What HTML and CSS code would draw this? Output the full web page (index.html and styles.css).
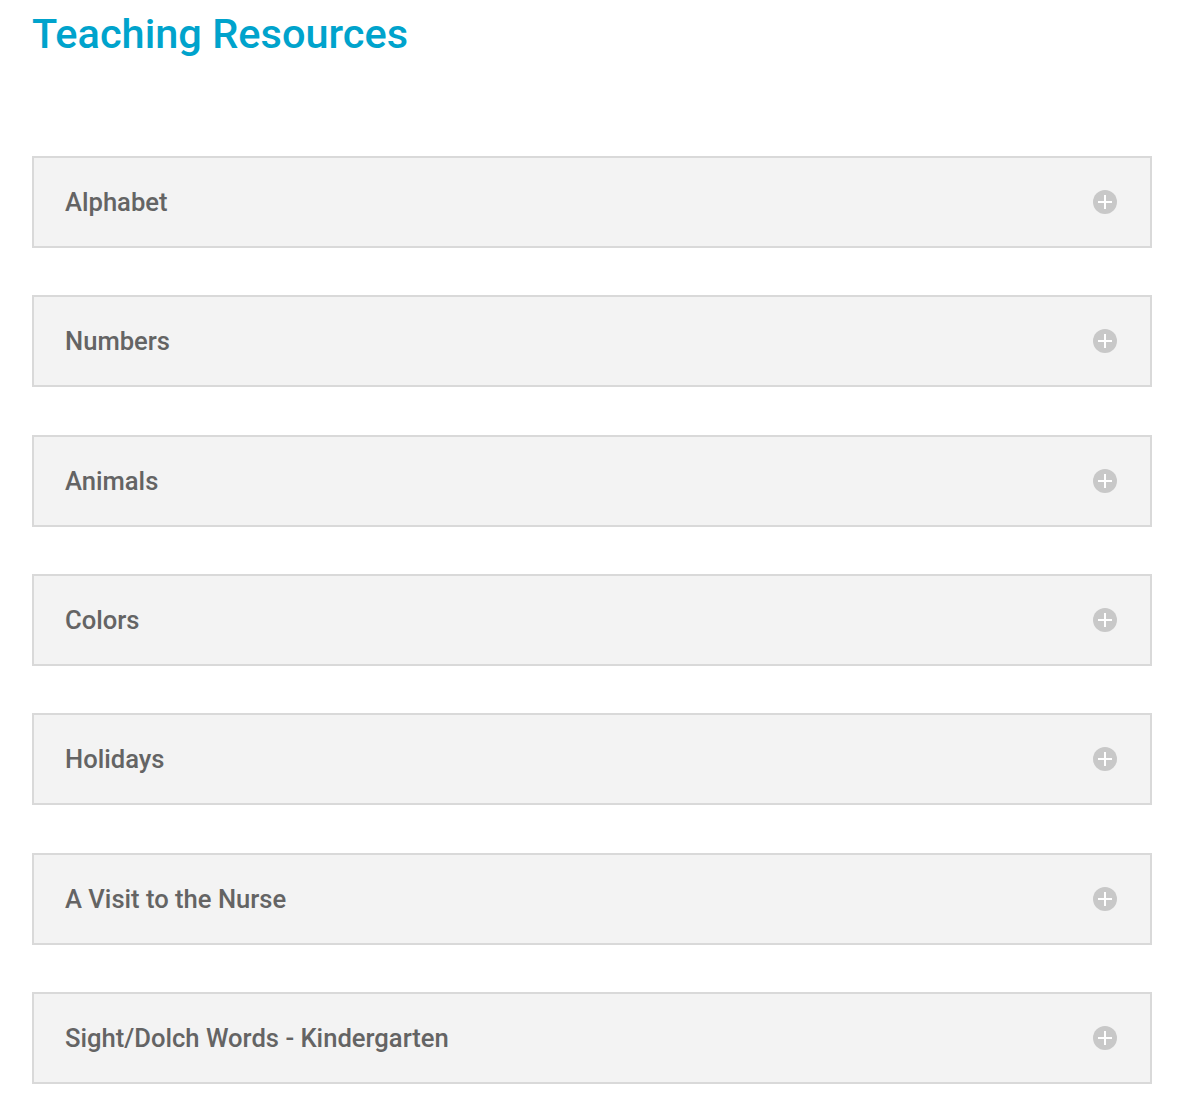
FILE: index.html
```html
<!DOCTYPE html>
<html>
<head>
<meta charset="utf-8">
<link rel="stylesheet" href="styles.css">
</head>
<body>
<div class="page">
  <h1 class="title">Teaching Resources</h1>
  <div class="accordion">
    <div class="item"><span class="label">Alphabet</span><span class="toggle"></span></div>
    <div class="item"><span class="label">Numbers</span><span class="toggle"></span></div>
    <div class="item"><span class="label">Animals</span><span class="toggle"></span></div>
    <div class="item"><span class="label">Colors</span><span class="toggle"></span></div>
    <div class="item"><span class="label">Holidays</span><span class="toggle"></span></div>
    <div class="item"><span class="label">A Visit to the Nurse</span><span class="toggle"></span></div>
    <div class="item"><span class="label">Sight/Dolch Words - Kindergarten</span><span class="toggle"></span></div>
  </div>
</div>
</body>
</html>
```

FILE: styles.css
```css
html, body {
  margin: 0;
  padding: 0;
  background: #ffffff;
}
.page {
  padding: 0 32px;
  font-family: Roboto, "Liberation Sans", sans-serif;
}
.title {
  margin: 0;
  padding-top: 9px;
  font-size: 41.5px;
  line-height: 50px;
  font-weight: 500;
  color: #00a3cc;
}
.accordion {
  margin-top: 97px;
  width: 1120px;
  display: flex;
  flex-direction: column;
  gap: 47.33px;
}
.item {
  box-sizing: border-box;
  height: 92px;
  border: 2px solid #d9d9d9;
  background: #f3f3f3;
  display: flex;
  align-items: center;
  justify-content: space-between;
  padding: 0 33px 0 31px;
}
.label {
  font-size: 25.6px;
  font-weight: 500;
  color: #646464;
}
.toggle {
  position: relative;
  width: 24px;
  height: 24px;
  border-radius: 50%;
  background: #c8c8c8;
}
.toggle::before,
.toggle::after {
  content: "";
  position: absolute;
  background: #ffffff;
  left: 50%;
  top: 50%;
  transform: translate(-50%, -50%);
}
.toggle::before {
  width: 14px;
  height: 2px;
}
.toggle::after {
  width: 2px;
  height: 14px;
}
```
